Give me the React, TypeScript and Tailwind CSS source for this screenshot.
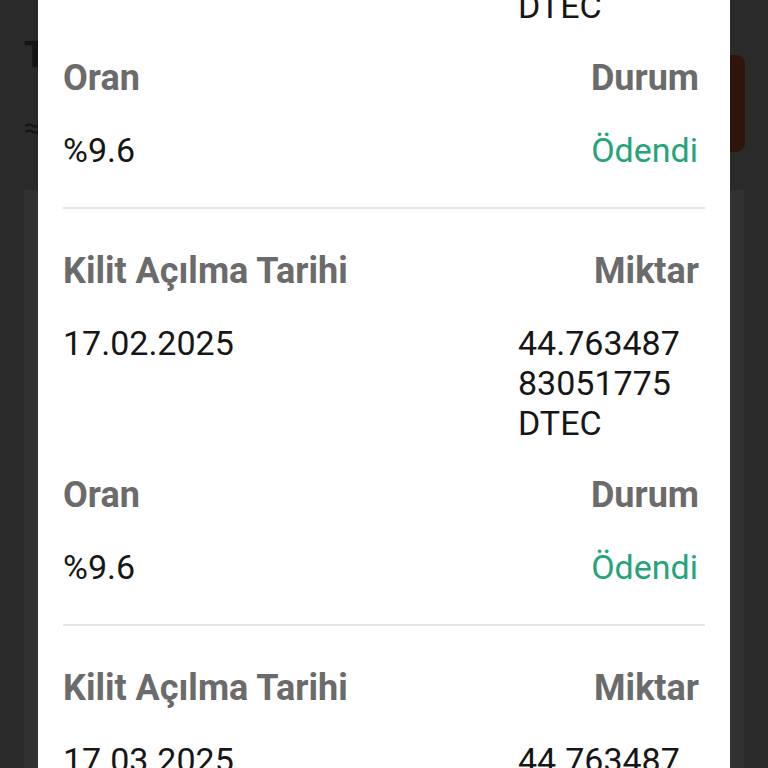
import React from "react";

type Sec = { date: string; amount: string[]; rate: string; status: string };

const sections: Sec[] = [
  { date: "17.01.2025", amount: ["44.763487", "83051775", "DTEC"], rate: "%9.6", status: "Ödendi" },
  { date: "17.02.2025", amount: ["44.763487", "83051775", "DTEC"], rate: "%9.6", status: "Ödendi" },
  { date: "17.03.2025", amount: ["44.763487", "83051775", "DTEC"], rate: "%9.6", status: "Ödendi" },
];

function Section({ s }: { s: Sec }) {
  return (
    <div className="pt-[42px] pb-[37px] border-b-2 border-[#e6e6e6]">
      <div className="flex justify-between items-center h-[40px] leading-[40px] text-[36px]">
        <div className="font-bold text-[#6b6b6b]">Kilit Açılma Tarihi</div>
        <div className="font-bold text-[#6b6b6b] pr-[6px]">Miktar</div>
      </div>
      <div className="flex justify-between items-start mt-[32px]">
        <div className="leading-[40px] text-[#161616]">{s.date}</div>
        <div className="w-[187px] leading-[40px] text-[#161616]">
          {s.amount.map((l, i) => (
            <div key={i}>{l}</div>
          ))}
        </div>
      </div>
      <div className="flex justify-between items-center h-[40px] leading-[40px] mt-[32px] text-[36px]">
        <div className="font-bold text-[#6b6b6b]">Oran</div>
        <div className="font-bold text-[#6b6b6b] pr-[6px]">Durum</div>
      </div>
      <div className="flex justify-between items-start h-[40px] leading-[40px] mt-[32px]">
        <div className="text-[#161616]">{s.rate}</div>
        <div className="text-[#27a37a] pr-[7px]">{s.status}</div>
      </div>
    </div>
  );
}

export default function App() {
  return (
    <div
      className="relative w-[768px] h-[768px] overflow-hidden bg-[#2a2a2a]"
      style={{ fontFamily: "Roboto, 'Noto Sans', sans-serif" }}
    >
      {/* page behind (dimmed) */}
      <div className="flex flex-col h-full">
        <div className="flex justify-between pl-[24px] pr-[23px] pt-[34px] h-[190px]">
          <div className="flex flex-col w-[14px] overflow-hidden">
            <div className="text-[36px] font-bold leading-[42px] text-[#141414]">T</div>
            <div className="text-[30px] leading-[40px] text-[#161616] mt-[32px]">≈</div>
          </div>
          <div className="mt-[21px] w-[120px] h-[97px] rounded-[9px] bg-[#2f1409]" />
        </div>
        <div className="flex-1 mx-[24px] bg-[#313131]" />
      </div>

      {/* bottom sheet overlay */}
      <div className="absolute top-0 bottom-0 left-[38px] w-[692px] bg-white overflow-hidden">
        <div className="px-[25px] mt-[-208px] text-[34px]">
          {sections.map((s, i) => (
            <Section key={i} s={s} />
          ))}
        </div>
      </div>
    </div>
  );
}
